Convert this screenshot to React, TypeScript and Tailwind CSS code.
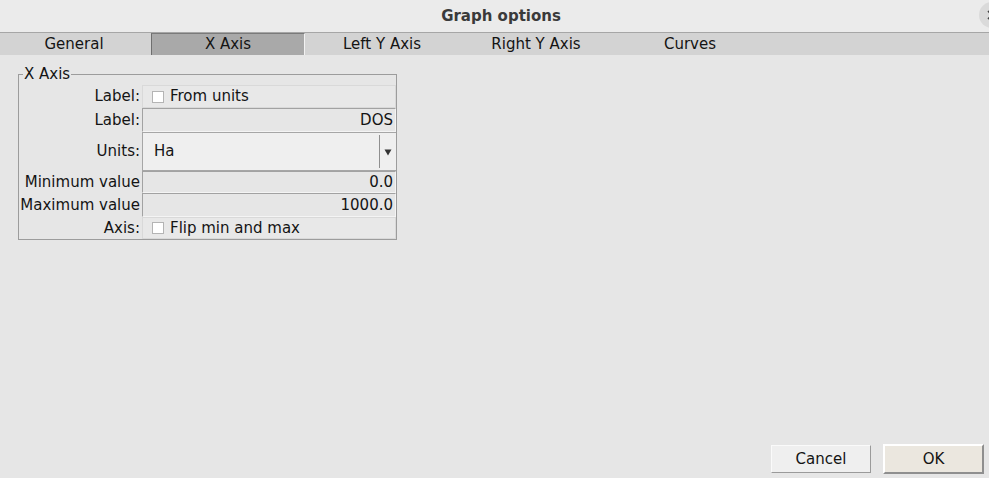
import React from "react";

const font = { fontFamily: '"DejaVu Sans", "Liberation Sans", sans-serif' };

function Check({ label }: { label: string }) {
  return (
    <div className="flex h-full items-center border border-[#d9d9d9] bg-[#e8e8e8] pl-[9px]">
      <span className="block h-[12px] w-[12px] border border-[#b4b4b4] bg-white" />
      <span className="ml-[6px]">{label}</span>
    </div>
  );
}

function Field({ value }: { value: string }) {
  return (
    <div className="flex h-full items-center justify-end border-l border-t border-[#a2a2a2] border-b-[#f4f4f4] border-r-[#f4f4f4] border-b border-r bg-[#e6e6e6] pr-[2px]">
      {value}
    </div>
  );
}

function Row({ label, h, children }: { label: string; h: string; children: React.ReactNode }) {
  return (
    <div className={`flex ${h}`}>
      <div className="flex w-[123px] items-center justify-end pr-[2px]">{label}</div>
      <div className="flex-1">{children}</div>
    </div>
  );
}

export default function App() {
  const tabs = ["General", "X Axis", "Left Y Axis", "Right Y Axis", "Curves"];
  return (
    <div
      style={font}
      className="relative flex h-[478px] w-[989px] flex-col overflow-hidden bg-[#e6e6e6] text-[15px] text-[#141414]"
    >
      {/* title bar */}
      <div className="relative flex h-[33px] shrink-0 items-center justify-center border-b border-[#a6a6a6] bg-[#ebebeb] pl-[13px]">
        <span className="font-bold text-[#3a3a3a]">Graph options</span>
        <div className="absolute right-[-16px] top-[2px] flex h-[26px] w-[26px] items-center justify-center rounded-full bg-[#dadada]">
          <svg width="10" height="10" viewBox="0 0 10 10">
            <path d="M1 1 L9 9 M9 1 L1 9" stroke="#444" strokeWidth="1.6" />
          </svg>
        </div>
      </div>

      {/* tabs */}
      <div className="flex h-[22px] shrink-0 bg-[#d3d3d3]">
        <div className="ml-[-3px] flex">
          {tabs.map((t) =>
            t === "X Axis" ? (
              <div
                key={t}
                className="flex h-[22px] w-[154px] items-center justify-center border-l border-r border-t border-l-[#6f6f6f] border-r-[#f2f2f2] border-t-[#7a7a7a] bg-[#a9a9a9]"
              >
                {t}
              </div>
            ) : (
              <div key={t} className="flex h-[22px] w-[154px] items-center justify-center">
                {t}
              </div>
            )
          )}
        </div>
      </div>

      {/* content */}
      <div className="flex-1 pl-[18px] pt-[10px]">
        <fieldset className="w-[379px] border border-[#9c9c9c] px-0 pb-0 pt-[2px]">
          <legend className="ml-[4px] px-[1px] leading-[18px]">X Axis</legend>
          <div className="flex flex-col">
            <Row label="Label:" h="h-[23px]">
              <Check label="From units" />
            </Row>
            <Row label="Label:" h="h-[24px]">
              <Field value="DOS" />
            </Row>
            <Row label="Units:" h="h-[39px]">
              <div className="flex h-full items-center border-l border-t border-b border-[#a6a6a6] bg-[#efefef] pl-[11px]">
                <span className="flex-1">Ha</span>
                <div className="flex h-[33px] w-[17px] items-center justify-center border-l border-[#8f8f8f]">
                  <svg width="8" height="8" viewBox="0 0 8 8">
                    <path d="M0.5 1.5 H7.5 L4 7.5 Z" fill="#333" />
                  </svg>
                </div>
              </div>
            </Row>
            <Row label="Minimum value" h="h-[22px]">
              <Field value="0.0" />
            </Row>
            <Row label="Maximum value" h="h-[24px]">
              <Field value="1000.0" />
            </Row>
            <Row label="Axis:" h="h-[22px]">
              <Check label="Flip min and max" />
            </Row>
          </div>
        </fieldset>
      </div>

      {/* buttons */}
      <div className="flex shrink-0 items-center justify-end gap-[12px] pb-[4px] pr-[5px]">
        <button className="h-[28px] w-[100px] border border-[#fafafa] border-b-[#9a9a9a] border-r-[#9a9a9a] bg-[#efefef]">
          Cancel
        </button>
        <button className="h-[30px] w-[101px] border-2 border-[#ffffff] border-b-[#8f8f8f] border-r-[#8f8f8f] bg-[#ebe7df]">
          OK
        </button>
      </div>
    </div>
  );
}
